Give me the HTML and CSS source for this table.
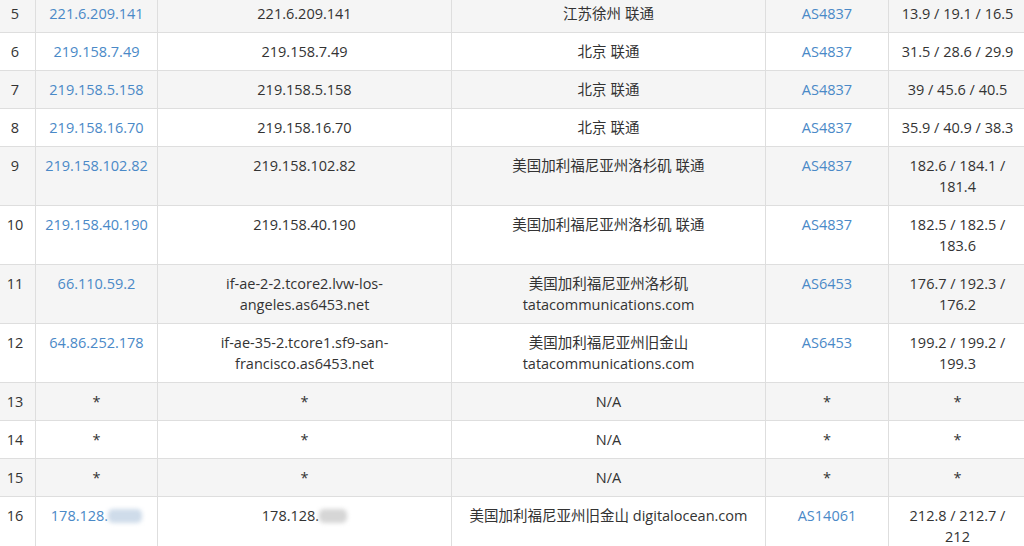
FILE: index.html
```html
<!DOCTYPE html>
<html lang="zh-CN">
<head>
    <meta charset="UTF-8">
    <title>Traceroute</title>
    <link rel="stylesheet" href="styles.css">
</head>
<body>
    <table class="trace">
        <colgroup>
            <col class="c-hop"><col class="c-ip"><col class="c-host"><col class="c-geo"><col class="c-as"><col class="c-rtt">
        </colgroup>
        <tbody>
            <tr><td>5</td><td><a href="#">221.6.209.141</a></td><td>221.6.209.141</td><td>江苏徐州 联通</td><td><a href="#">AS4837</a></td><td>13.9 / 19.1 / 16.5</td></tr>
            <tr><td>6</td><td><a href="#">219.158.7.49</a></td><td>219.158.7.49</td><td>北京 联通</td><td><a href="#">AS4837</a></td><td>31.5 / 28.6 / 29.9</td></tr>
            <tr><td>7</td><td><a href="#">219.158.5.158</a></td><td>219.158.5.158</td><td>北京 联通</td><td><a href="#">AS4837</a></td><td>39 / 45.6 / 40.5</td></tr>
            <tr><td>8</td><td><a href="#">219.158.16.70</a></td><td>219.158.16.70</td><td>北京 联通</td><td><a href="#">AS4837</a></td><td>35.9 / 40.9 / 38.3</td></tr>
            <tr><td>9</td><td><a href="#">219.158.102.82</a></td><td>219.158.102.82</td><td>美国加利福尼亚州洛杉矶 联通</td><td><a href="#">AS4837</a></td><td>182.6 / 184.1 / 181.4</td></tr>
            <tr><td>10</td><td><a href="#">219.158.40.190</a></td><td>219.158.40.190</td><td>美国加利福尼亚州洛杉矶 联通</td><td><a href="#">AS4837</a></td><td>182.5 / 182.5 / 183.6</td></tr>
            <tr><td>11</td><td><a href="#">66.110.59.2</a></td><td>if-ae-2-2.tcore2.lvw-los-angeles.as6453.net</td><td>美国加利福尼亚州洛杉矶 tatacommunications.com</td><td><a href="#">AS6453</a></td><td>176.7 / 192.3 / 176.2</td></tr>
            <tr><td>12</td><td><a href="#">64.86.252.178</a></td><td>if-ae-35-2.tcore1.sf9-san-francisco.as6453.net</td><td>美国加利福尼亚州旧金山 tatacommunications.com</td><td><a href="#">AS6453</a></td><td>199.2 / 199.2 / 199.3</td></tr>
            <tr><td>13</td><td>*</td><td>*</td><td>N/A</td><td>*</td><td>*</td></tr>
            <tr><td>14</td><td>*</td><td>*</td><td>N/A</td><td>*</td><td>*</td></tr>
            <tr><td>15</td><td>*</td><td>*</td><td>N/A</td><td>*</td><td>*</td></tr>
            <tr><td>16</td><td><a href="#">178.128.<span class="masked blue"></span></a></td><td>178.128.<span class="masked"></span></td><td>美国加利福尼亚州旧金山 digitalocean.com</td><td><a href="#">AS14061</a></td><td>212.8 / 212.7 / 212</td></tr>
        </tbody>
    </table>
</body>
</html>
```

FILE: styles.css
```css
body { margin: 0; overflow: hidden; background: #fff; }
.trace { border-collapse: collapse; table-layout: fixed; width: 1032px; margin: -6px 0 0 -6px; font-family: "Open Sans", "Noto Sans CJK SC", sans-serif; font-size: 14.5px; line-height: 21px; color: #333; }
.trace td { border: 1px solid #dedede; padding: 8px; text-align: center; vertical-align: top; }
.trace tr:nth-child(odd) td { background: #f5f5f5; }
.trace a { color: #4a89c7; text-decoration: none; }
.c-hop { width: 41px; }
.c-ip { width: 122px; }
.c-host { width: 294px; }
.c-geo { width: 314px; }
.c-as { width: 123px; }
.c-rtt { width: 138px; }
.masked { display: inline-block; width: 28px; height: 14px; vertical-align: -2px; background: #d6d6d6; border-radius: 5px; filter: blur(2px); }
.masked.blue { width: 34px; background: #cfdcea; }
```
